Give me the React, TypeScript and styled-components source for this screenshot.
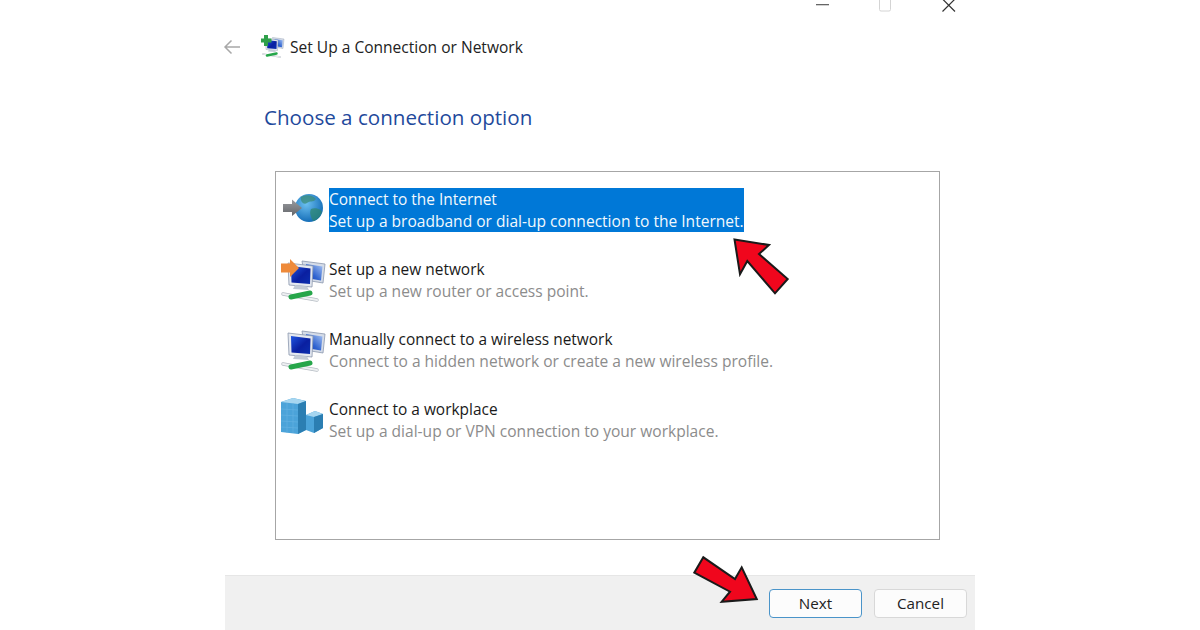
import React from "react";
import styled, { createGlobalStyle } from "styled-components";

const Global = createGlobalStyle`
  html, body { margin: 0; padding: 0; background: #fff; }
  body { font-family: "Open Sans", "Noto Sans", "Liberation Sans", sans-serif; overflow: hidden; }
`;

const Page = styled.div`
  position: relative;
  width: 1200px;
  height: 630px;
  overflow: hidden;
  background: #fff;
`;

const Window = styled.div`
  width: 750px;
  height: 630px;
  margin-left: 225px;
  display: flex;
  flex-direction: column;
`;

const Caption = styled.div`
  height: 14px;
  display: flex;
  justify-content: flex-end;
  padding-right: 18px;
  gap: 47px;
  color: #333;
`;

const CaptionIcon = styled.svg`
  width: 16px;
  height: 14px;
  display: block;
`;

const Header = styled.div`
  height: 66px;
  display: flex;
  align-items: center;
  padding-bottom: 1px;
  box-sizing: border-box;
`;

const BackIcon = styled.svg`
  width: 18px;
  height: 16px;
  margin-left: -2px;
  margin-right: 20px;
  display: block;
`;

const WizardIcon = styled.svg`
  width: 24px;
  height: 24px;
  margin-right: 5px;
  display: block;
`;

const WizardTitle = styled.div`
  font-size: 15.55px;
  color: #222;
  line-height: 20px;
`;

const Heading = styled.h1`
  margin: 0 0 0 39px;
  padding-top: 22px;
  font-size: 20.6px;
  font-weight: 400;
  line-height: 30px;
  color: #1f4a9c;
`;

const ListBox = styled.div`
  box-sizing: border-box;
  margin: 39px 0 0 50px;
  width: 665px;
  height: 369px;
  border: 1px solid #a6a6a6;
  padding-top: 16px;
  display: flex;
  flex-direction: column;
  gap: 26px;
`;

const Option = styled.div`
  display: flex;
  align-items: center;
  height: 44px;
  padding-left: 5px;
`;

const OptionIcon = styled.svg`
  width: 48px;
  height: 48px;
  flex: none;
  display: block;
`;

const OptionText = styled.div<{ $selected?: boolean }>`
  display: inline-block;
  background: ${(p) => (p.$selected ? "#0078d7" : "transparent")};
  white-space: nowrap;
  line-height: 22px;
`;

const OptionTitle = styled.div<{ $selected?: boolean }>`
  font-size: 15.45px;
  color: ${(p) => (p.$selected ? "#f2f8fd" : "#1a1a1a")};
`;

const OptionDesc = styled.div<{ $selected?: boolean }>`
  font-size: 15.55px;
  color: ${(p) => (p.$selected ? "#f2f8fd" : "#8c8c8c")};
`;

const Footer = styled.div`
  margin-top: auto;
  height: 55px;
  box-sizing: border-box;
  background: #f0f0f0;
  border-top: 1px solid #e6e6e6;
  display: flex;
  justify-content: flex-end;
  align-items: center;
  gap: 12px;
  padding: 0 8px 0 0;
`;

const Button = styled.div<{ $primary?: boolean }>`
  width: 93px;
  height: 29px;
  box-sizing: border-box;
  border-radius: 4px;
  border: 1px solid ${(p) => (p.$primary ? "#4a94c9" : "#d8d8d8")};
  background: #fcfcfc;
  color: #222;
  font-size: 15.2px;
  display: flex;
  align-items: center;
  justify-content: center;
`;

const Overlay = styled.svg`
  position: absolute;
  left: 0;
  top: 0;
  width: 1200px;
  height: 630px;
  pointer-events: none;
`;

const HiddenDefs = styled.svg`
  position: absolute;
  width: 0;
  height: 0;
`;

const Computers: React.FC = () => (
  <>
    <polygon points="21,5 44,8 42,27 24,24" fill="#d5dce8" stroke="#8a97ad" strokeWidth="0.8" />
    <polygon points="25,8 41.5,10.5 40,24.5 25,22" fill="url(#scrBack)" />
    <polygon points="7,7 32,10 31,31 8,29" fill="#e4e8ef" stroke="#8a97ad" strokeWidth="0.8" />
    <polygon points="10,10 29.5,12.5 29,28 10.5,26.5" fill="url(#scrFront)" />
    <polygon points="14,29 26,30.5 28,34 12,33" fill="#c3cbd6" />
    <path d="M2 38 L36 44" stroke="#b6bcc4" strokeWidth="3.4" strokeLinecap="round" />
    <path d="M2 38 L36 44" stroke="#eef0f2" strokeWidth="2" strokeLinecap="round" />
    <path d="M10 41 L29 37" stroke="#26a64a" strokeWidth="5" strokeLinecap="round" />
  </>
);

const SharedDefs: React.FC = () => (
  <HiddenDefs aria-hidden="true">
    <defs>
      <linearGradient id="scrFront" x1="0" y1="0" x2="1" y2="1">
        <stop offset="0%" stopColor="#1f55e0" />
        <stop offset="55%" stopColor="#0a1fa0" />
        <stop offset="100%" stopColor="#0a2fb0" />
      </linearGradient>
      <linearGradient id="scrBack" x1="1" y1="0" x2="0" y2="1">
        <stop offset="0%" stopColor="#a8c4f2" />
        <stop offset="60%" stopColor="#2f63d0" />
        <stop offset="100%" stopColor="#1a3fb0" />
      </linearGradient>
    </defs>
  </HiddenDefs>
);

const GlobeIcon: React.FC = () => (
  <OptionIcon viewBox="0 0 48 48">
    <defs>
      <radialGradient id="g1" cx="40%" cy="35%" r="70%">
        <stop offset="0%" stopColor="#6cc0f0" />
        <stop offset="100%" stopColor="#0f68b4" />
      </radialGradient>
      <linearGradient id="g2" x1="0" y1="0" x2="0" y2="1">
        <stop offset="0%" stopColor="#9a9ca0" />
        <stop offset="100%" stopColor="#64666a" />
      </linearGradient>
    </defs>
    <circle cx="28" cy="22" r="14" fill="url(#g1)" />
    <path d="M20 11 C25 8 32 9 35 13 C32 17 29 14 26 17 C23 19 19 16 20 11 Z" fill="#3b8c7a" opacity=".75" />
    <path d="M30 23 C34 21 40 23 41 26 C39 32 34 35 32 35 C30 31 28 27 30 23 Z" fill="#2e8670" opacity=".75" />
    <path d="M2 18 H11 V13.5 L21 22 L11 30 V26 H2 Z" fill="url(#g2)" />
  </OptionIcon>
);

const NewNetworkIcon: React.FC = () => (
  <OptionIcon viewBox="0 0 48 48">
    <Computers />
    <path d="M0 7.5 H9 V3 L18 12 L9 21 V16.5 H0 Z" fill="#ee8a3a" />
  </OptionIcon>
);

const WirelessIcon: React.FC = () => (
  <OptionIcon viewBox="0 0 48 48">
    <Computers />
  </OptionIcon>
);

const WorkplaceIcon: React.FC = () => (
  <OptionIcon viewBox="0 0 48 48">
    <polygon points="0,6 12,2 25,5 25,34 17,38 0,36" fill="#4ba3d9" />
    <polygon points="0,6 12,2 25,5 17,8" fill="#a6d6f0" />
    <polygon points="17,8 25,5 25,34 17,38" fill="#2b7eb2" />
    <path d="M0 13 L17 14 M0 19 L17 20 M0 25 L17 26 M0 31 L17 32 M6 7 V37 M12 7 V37" stroke="#66b3e2" strokeWidth="0.6" />
    <polygon points="25,19 34,15 42,18 42,32 33,37 25,34" fill="#4ba3d9" />
    <polygon points="25,19 34,15 42,18 33,21" fill="#a6d6f0" />
    <polygon points="33,21 42,18 42,32 33,37" fill="#2b7eb2" />
  </OptionIcon>
);

const App: React.FC = () => (
  <Page>
    <Global />
    <SharedDefs />
    <Window>
      <Caption>
        <CaptionIcon viewBox="0 0 16 14">
          <rect x="1" y="4" width="13" height="1.3" fill="#666" />
        </CaptionIcon>
        <CaptionIcon viewBox="0 0 16 14">
          <rect x="1.5" y="-3" width="11" height="14" rx="1.5" fill="none" stroke="#d4d4d4" />
        </CaptionIcon>
        <CaptionIcon viewBox="0 0 16 14">
          <path d="M1.5 -1 L14 11.5 M14 -1 L1.5 11.5" stroke="#333" strokeWidth="1.2" fill="none" />
        </CaptionIcon>
      </Caption>
      <Header>
        <BackIcon viewBox="0 0 18 16">
          <path d="M17 8 H2 M8.5 1.5 L2 8 L8.5 14.5" stroke="#a8a8a8" strokeWidth="1.5" fill="none" />
        </BackIcon>
        <WizardIcon viewBox="0 0 48 48">
          <g transform="translate(2 0)">
            <Computers />
          </g>
          <path d="M6 0 H14 V7 H21 V15 H14 V22 H6 V15 H0 V7 H6 Z" fill="#2fa04a" />
        </WizardIcon>
        <WizardTitle>Set Up a Connection or Network</WizardTitle>
      </Header>
      <Heading>Choose a connection option</Heading>
      <ListBox>
        <Option>
          <GlobeIcon />
          <OptionText $selected>
            <OptionTitle $selected>Connect to the Internet</OptionTitle>
            <OptionDesc $selected>Set up a broadband or dial-up connection to the Internet.</OptionDesc>
          </OptionText>
        </Option>
        <Option>
          <NewNetworkIcon />
          <OptionText>
            <OptionTitle>Set up a new network</OptionTitle>
            <OptionDesc>Set up a new router or access point.</OptionDesc>
          </OptionText>
        </Option>
        <Option>
          <WirelessIcon />
          <OptionText>
            <OptionTitle>Manually connect to a wireless network</OptionTitle>
            <OptionDesc>Connect to a hidden network or create a new wireless profile.</OptionDesc>
          </OptionText>
        </Option>
        <Option>
          <WorkplaceIcon />
          <OptionText>
            <OptionTitle>Connect to a workplace</OptionTitle>
            <OptionDesc>Set up a dial-up or VPN connection to your workplace.</OptionDesc>
          </OptionText>
        </Option>
      </ListBox>
      <Footer>
        <Button $primary>Next</Button>
        <Button>Cancel</Button>
      </Footer>
    </Window>
    <Overlay viewBox="0 0 1200 630">
      <polygon
        points="734.5,239.5 769,245 759,254 787.7,279 775,293.3 747.3,261 740,274.3"
        fill="#f0061d"
        stroke="#1a1a1a"
        strokeWidth="2"
      />
      <polygon
        points="756.7,599 741.7,567.3 735,579 703.3,557.3 694.3,572.7 730,591.7 721.7,601.7"
        fill="#f0061d"
        stroke="#1a1a1a"
        strokeWidth="2"
      />
    </Overlay>
  </Page>
);

export default App;
